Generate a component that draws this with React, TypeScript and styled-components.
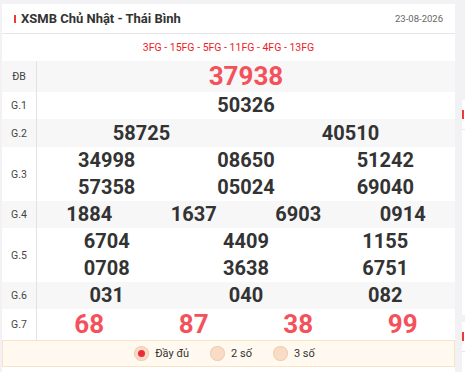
import React from "react";
import styled, { createGlobalStyle } from "styled-components";

const GlobalStyle = createGlobalStyle`
  html, body { margin: 0; padding: 0; background: #f2f2f5; }
  body { font-family: Roboto, "Liberation Sans", Arial, sans-serif; color: #333; }
`;

const Page = styled.div`
  display: flex;
  align-items: flex-start;
  gap: 7px;
  padding: 4px 0 0 2px;
  height: 368px;
  overflow: hidden;
`;

const Card = styled.section`
  width: 453px;
  flex: none;
  background: #fff;
`;

const Header = styled.div`
  display: flex;
  align-items: center;
  justify-content: space-between;
  height: 29px;
  padding: 0 12px 0 12px;
  border-bottom: 1px solid #e6e6e9;
`;

const Title = styled.h2`
  display: flex;
  align-items: center;
  gap: 5px;
  margin: 0;
  font-size: 13px;
  font-weight: 700;
  color: #333;
  &::before {
    content: "";
    width: 2px;
    height: 8px;
    background: #ea3a3a;
  }
`;

const DateText = styled.span`
  font-size: 9.5px;
  color: #666;
`;

const Codes = styled.div`
  height: 27px;
  display: flex;
  align-items: center;
  justify-content: center;
  font-size: 10.5px;
  color: #ee1c25;
`;

const Row = styled.div<{ $alt?: boolean; $h: number }>`
  display: grid;
  grid-template-columns: 35px 1fr;
  min-height: ${(p) => p.$h}px;
  background: ${(p) => (p.$alt ? "#f7f7f8" : "#fff")};
`;

const Label = styled.div`
  display: flex;
  align-items: center;
  justify-content: center;
  border-right: 1px solid #e3e3e6;
  font-size: 10.5px;
  color: #444;
`;

const Nums = styled.div<{ $cols: number }>`
  display: grid;
  grid-template-columns: repeat(${(p) => p.$cols}, 1fr);
  grid-auto-rows: 1fr;
  align-items: center;
`;

const Num = styled.span<{ $red?: boolean }>`
  text-align: center;
  font-weight: 700;
  font-size: ${(p) => (p.$red ? "26px" : "20px")};
  line-height: 27px;
  color: ${(p) => (p.$red ? "#f4515b" : "#333")};
`;

const Footer = styled.div`
  display: flex;
  align-items: center;
  justify-content: center;
  gap: 21px;
  height: 25px;
  padding-right: 8px;
  background: #fff9ef;
  border: 1px solid #f7e4c8;
`;

const Option = styled.label`
  display: flex;
  align-items: center;
  gap: 6px;
  font-size: 11px;
  color: #333;
`;

const Radio = styled.span<{ $on?: boolean }>`
  width: 15px;
  height: 15px;
  border-radius: 50%;
  background: #f8dcc6;
  box-shadow: inset 0 0 0 1px #f1cfb4;
  display: flex;
  align-items: center;
  justify-content: center;
  &::after {
    content: "";
    display: ${(p) => (p.$on ? "block" : "none")};
    width: 7px;
    height: 7px;
    border-radius: 50%;
    background: #ee2a36;
  }
`;

const Spacer = styled.div`
  height: 5px;
  background: #fff;
`;

const Side = styled.aside`
  flex: 1;
  display: flex;
  flex-direction: column;
  padding-top: 96px;
`;

const SideCard = styled.div<{ $h: number }>`
  height: ${(p) => p.$h}px;
  background: #fff;
  border-bottom: 7px solid #f2f2f5;
`;

const SideHead = styled.div`
  height: 29px;
  border-bottom: 1px solid #e6e6e9;
  display: flex;
  align-items: center;
  &::before {
    content: "";
    width: 2px;
    height: 9px;
    background: #ea3a3a;
  }
`;

type Prize = { label: string; cols: number; nums: string[]; red?: boolean; h: number };

const prizes: Prize[] = [
  { label: "ĐB", cols: 1, nums: ["37938"], red: true, h: 31 },
  { label: "G.1", cols: 1, nums: ["50326"], h: 27 },
  { label: "G.2", cols: 2, nums: ["58725", "40510"], h: 28 },
  { label: "G.3", cols: 3, nums: ["34998", "08650", "51242", "57358", "05024", "69040"], h: 54 },
  { label: "G.4", cols: 4, nums: ["1884", "1637", "6903", "0914"], h: 27 },
  { label: "G.5", cols: 3, nums: ["6704", "4409", "1155", "0708", "3638", "6751"], h: 54 },
  { label: "G.6", cols: 3, nums: ["031", "040", "082"], h: 27 },
  { label: "G.7", cols: 4, nums: ["68", "87", "38", "99"], red: true, h: 31 },
];

export default function App() {
  return (
    <>
      <GlobalStyle />
      <Page>
        <Card>
          <Header>
            <Title>XSMB Chủ Nhật - Thái Bình</Title>
            <DateText>23-08-2026</DateText>
          </Header>
          <Codes>3FG - 15FG - 5FG - 11FG - 4FG - 13FG</Codes>
          {prizes.map((p, i) => (
            <Row key={p.label} $alt={i % 2 === 0} $h={p.h}>
              <Label>{p.label}</Label>
              <Nums $cols={p.cols}>
                {p.nums.map((n, j) => (
                  <Num key={j} $red={p.red}>
                    {n}
                  </Num>
                ))}
              </Nums>
            </Row>
          ))}
          <Footer>
            <Option>
              <Radio $on />
              Đầy đủ
            </Option>
            <Option>
              <Radio />2 số
            </Option>
            <Option>
              <Radio />3 số
            </Option>
          </Footer>
          <Spacer />
        </Card>
        <Side>
          <SideCard $h={215}>
            <SideHead />
          </SideCard>
          <SideCard $h={120}>
            <SideHead />
          </SideCard>
        </Side>
      </Page>
    </>
  );
}
